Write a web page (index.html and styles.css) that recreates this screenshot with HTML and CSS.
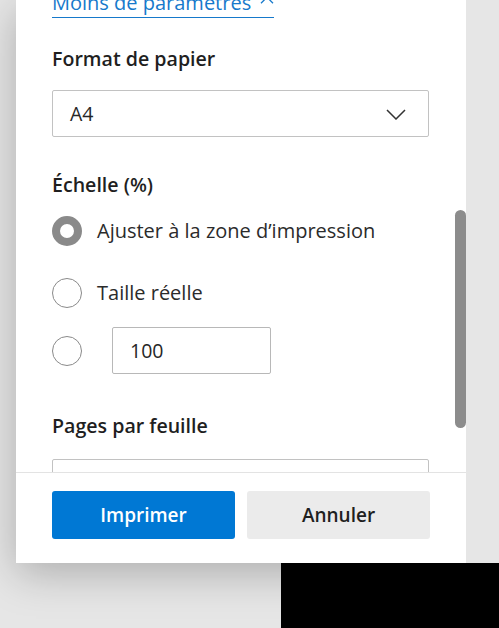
FILE: index.html
```html
<!DOCTYPE html>
<html lang="fr">
<head>
<meta charset="utf-8">
<title>Imprimer</title>
<link rel="stylesheet" href="styles.css">
</head>
<body>
<div class="top">
  <div class="gutter"></div>
  <div class="dialog">
    <div class="scroll">
      <div class="content">
        <a class="more" href="#">Moins de paramètres
          <svg class="up" width="14" height="8" viewBox="0 0 14 8"><path d="M1 7.2 L7 1.2 L13 7.2" fill="none" stroke="#1679cb" stroke-width="1.3"/></svg>
        </a>
        <section class="field paper">
          <h2 class="label">Format de papier</h2>
          <div class="select">
            <span>A4</span>
            <svg width="20" height="11" viewBox="0 0 20 11"><path d="M1 1 L10 10 L19 1" fill="none" stroke="#333" stroke-width="1.5"/></svg>
          </div>
        </section>
        <section class="field scale">
          <h2 class="label">Échelle (%)</h2>
          <div class="radio r1"><span class="circle checked"></span><span class="rtext">Ajuster à la zone d’impression</span></div>
          <div class="radio r2"><span class="circle"></span><span class="rtext">Taille réelle</span></div>
          <div class="radio r3"><span class="circle"></span><div class="num">100</div></div>
        </section>
        <section class="field pages">
          <h2 class="label">Pages par feuille</h2>
          <div class="select"></div>
        </section>
      </div>
      <div class="thumb"></div>
    </div>
    <div class="footer">
      <button class="btn primary">Imprimer</button>
      <button class="btn secondary">Annuler</button>
    </div>
  </div>
  <div class="side"></div>
</div>
<div class="bottom">
  <div class="black"></div>
</div>
</body>
</html>
```

FILE: styles.css
```css
html, body {
  margin: 0;
  padding: 0;
  background: #e6e6e6;
  overflow: hidden;
  font-family: "Open Sans", "Noto Sans", sans-serif;
}
.top {
  display: flex;
  height: 563px;
}
.gutter {
  width: 16px;
  flex: none;
}
.dialog {
  width: 450px;
  flex: none;
  background: #fff;
  display: flex;
  flex-direction: column;
  box-shadow: 0 10px 40px rgba(0, 0, 0, 0.25);
  position: relative;
}
.side {
  flex: 1;
  background: #e6e6e6;
  position: relative;
  z-index: 1;
}
.scroll {
  height: 472px;
  overflow: hidden;
  position: relative;
  flex: none;
}
.content {
  padding: 0 37px 0 36px;
  display: flex;
  flex-direction: column;
}
.more {
  align-self: flex-start;
  margin-top: -9px;
  display: inline-flex;
  align-items: center;
  gap: 9px;
  font-size: 20px;
  line-height: 24px;
  color: #1679cb;
  text-decoration: none;
  padding-bottom: 2px;
  border-bottom: 1px solid #1679cb;
}
.more .up {
  margin-top: -6px;
}
.label {
  margin: 0;
  font-size: 19.6px;
  line-height: 24px;
  font-weight: 600;
  color: #1f1f1f;
}
.paper {
  margin-top: 29px;
}
.select {
  margin-top: 19px;
  height: 45px;
  border: 1px solid #c2c2c2;
  border-radius: 2px;
  display: flex;
  align-items: center;
  justify-content: space-between;
  padding: 0 22px 0 17px;
  font-size: 19.5px;
  color: #262626;
}
.select svg {
  margin-top: 1px;
}
.scale {
  margin-top: 36px;
}
.radio {
  display: flex;
  align-items: center;
  font-size: 20px;
  line-height: 24px;
  color: #2b2b2b;
}
.circle {
  width: 30px;
  height: 30px;
  border: 1px solid #8a8a8a;
  border-radius: 50%;
  box-sizing: border-box;
  flex: none;
}
.circle.checked {
  border: 8.5px solid #8a8a8a;
}
.rtext {
  margin-left: 15px;
}
.r1 {
  margin-top: 19px;
  height: 30px;
}
.r2 {
  margin-top: 32px;
  height: 30px;
}
.r3 {
  margin-top: 19px;
  height: 47px;
}
.num {
  margin-left: 30px;
  width: 159px;
  height: 47px;
  box-sizing: border-box;
  border: 1px solid #b8b8b8;
  border-radius: 2px;
  display: flex;
  align-items: center;
  padding-left: 17px;
  font-size: 19.5px;
  color: #262626;
}
.pages {
  margin-top: 40px;
}
.pages .select {
  margin-top: 21px;
}
.thumb {
  position: absolute;
  right: 0;
  top: 210px;
  width: 11px;
  height: 218px;
  border-radius: 6px;
  background: #8c8c8c;
}
.footer {
  border-top: 1px solid #e3e3e3;
  padding: 18px 36px 0 36px;
  display: flex;
  gap: 12px;
}
.btn {
  width: 183px;
  height: 48px;
  border: none;
  border-radius: 3px;
  font-family: "Open Sans", "Noto Sans", sans-serif;
  font-size: 19px;
  font-weight: 600;
  padding: 0;
}
.primary {
  background: #0078d4;
  color: #fff;
}
.secondary {
  background: #ebebeb;
  color: #1f1f1f;
}
.bottom {
  height: 65px;
  display: flex;
  justify-content: flex-end;
}
.black {
  width: 218px;
  background: #000;
  position: relative;
  z-index: 1;
}
```
